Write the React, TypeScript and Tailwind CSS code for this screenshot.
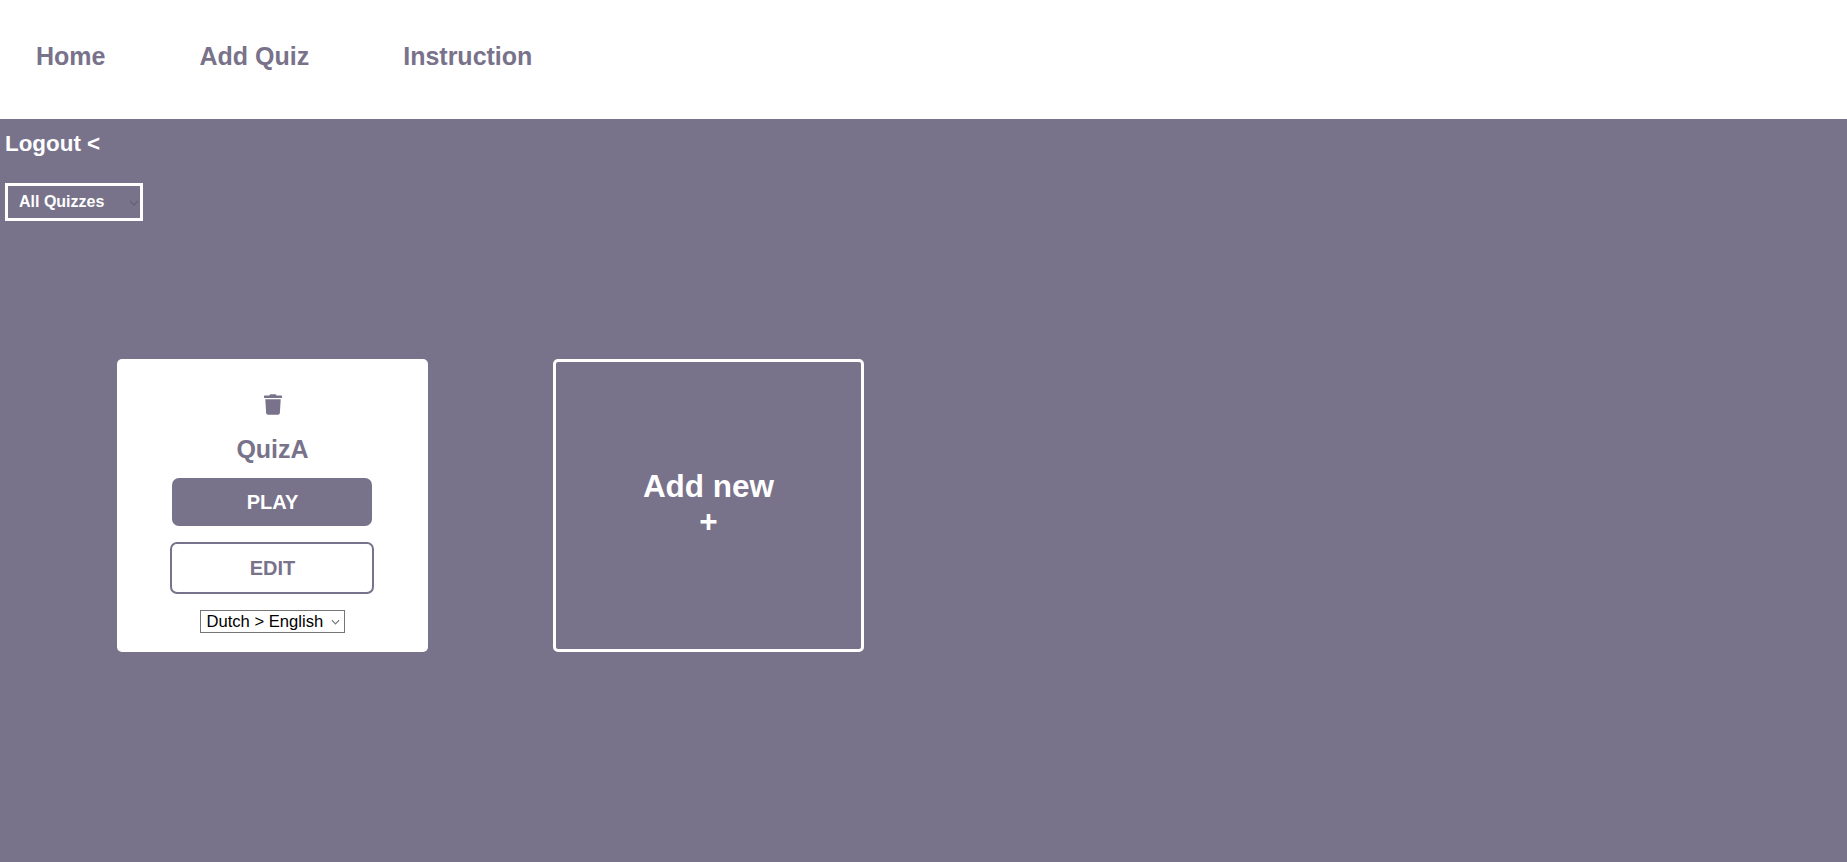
import { FaTrash } from "react-icons/fa";

const navLinks = ["Home", "Add Quiz", "Instruction"];

function Chevron({ className }: { className: string }) {
  return (
    <svg viewBox="0 0 10 6" fill="none" stroke="currentColor" strokeWidth="1.3" className={className}>
      <path d="M1 1l4 4 4-4" />
    </svg>
  );
}

export default function App() {
  return (
    <div className="min-h-[862px] flex flex-col bg-[#78728a] font-['Liberation_Sans',Arial,sans-serif]">
      <nav className="h-[119px] bg-white flex items-center pl-9 pb-[5px] gap-[94px]">
        {navLinks.map((link) => (
          <a key={link} href="#" className="text-[25px] font-bold text-[#78728a]">
            {link}
          </a>
        ))}
      </nav>

      <div className="pl-[5px] pt-[13px]">
        <a href="#" className="block text-[22.4px] leading-[24px] font-bold text-white">
          Logout &lt;
        </a>
        <div className="relative mt-[27px] w-[138px]">
          <select className="block appearance-none w-full h-[38px] pl-[11px] border-[3px] border-white bg-[#78728a] text-white text-base font-bold">
            <option>All Quizzes</option>
          </select>
          <Chevron className="absolute right-[4px] top-[17px] w-[10px] h-[6px] text-[#66617a] pointer-events-none" />
        </div>
      </div>

      <div className="flex gap-[125px] pl-[117px] pt-[138px]">
        <div className="w-[311px] h-[293px] bg-white rounded-[5px] flex flex-col items-center pt-[35px] pr-px">
          <FaTrash className="ml-px text-[#78728a] w-[18px] h-[21px]" />
          <h2 className="ml-px mt-5 text-[25px] leading-7 font-bold text-[#78728a]">QuizA</h2>
          <button className="mt-[15px] pl-px pb-px w-[200px] h-[48px] rounded-[7px] bg-[#78728a] text-white text-xl font-bold">
            PLAY
          </button>
          <button className="mt-4 pl-px pb-px w-[204px] h-[52px] rounded-[7px] border-2 border-[#78728a] bg-white text-[#78728a] text-xl font-bold">
            EDIT
          </button>
          <div className="relative mt-4 w-[145px]">
            <select className="block appearance-none w-full h-[23px] pl-[6px] border border-[#767676] bg-white text-black text-[16.6px] leading-[21px]">
              <option>Dutch &gt; English</option>
            </select>
            <Chevron className="absolute right-[5px] top-[9px] w-[9px] h-[6px] text-[#767676] pointer-events-none" />
          </div>
        </div>

        <div className="w-[311px] h-[293px] rounded-[5px] border-[3px] border-white flex flex-col items-center justify-center pb-[3px] text-white font-bold">
          <span className="text-[31.5px] leading-[35px]">Add new</span>
          <span className="text-[31.5px] leading-[35px]">+</span>
        </div>
      </div>
    </div>
  );
}
